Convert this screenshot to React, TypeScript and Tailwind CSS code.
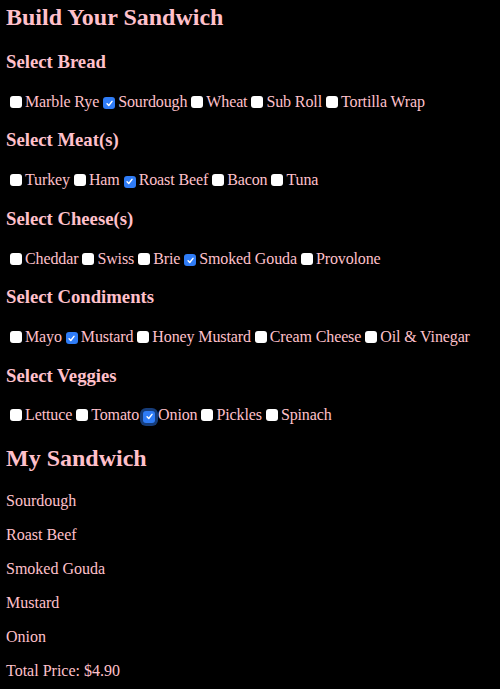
import React from "react";

type Item = { name: string; checked?: boolean; focus?: boolean };

const sections: { title: string; items: Item[] }[] = [
  {
    title: "Select Bread",
    items: [
      { name: "Marble Rye" },
      { name: "Sourdough", checked: true },
      { name: "Wheat" },
      { name: "Sub Roll" },
      { name: "Tortilla Wrap" },
    ],
  },
  {
    title: "Select Meat(s)",
    items: [
      { name: "Turkey" },
      { name: "Ham" },
      { name: "Roast Beef", checked: true },
      { name: "Bacon" },
      { name: "Tuna" },
    ],
  },
  {
    title: "Select Cheese(s)",
    items: [
      { name: "Cheddar" },
      { name: "Swiss" },
      { name: "Brie" },
      { name: "Smoked Gouda", checked: true },
      { name: "Provolone" },
    ],
  },
  {
    title: "Select Condiments",
    items: [
      { name: "Mayo" },
      { name: "Mustard", checked: true },
      { name: "Honey Mustard" },
      { name: "Cream Cheese" },
      { name: "Oil & Vinegar" },
    ],
  },
  {
    title: "Select Veggies",
    items: [
      { name: "Lettuce" },
      { name: "Tomato" },
      { name: "Onion", checked: true, focus: true },
      { name: "Pickles" },
      { name: "Spinach" },
    ],
  },
];

function Box({ checked, focus }: { checked?: boolean; focus?: boolean }) {
  if (checked) {
    return (
      <span
        className={
          "inline-flex items-center justify-center w-[12px] h-[12px] ml-[4px] mr-[3px] rounded-[3px] bg-[#2f7cf6] align-[-1px] " +
          (focus ? "shadow-[0_0_0_3px_rgba(40,110,220,0.55)]" : "")
        }
      >
        <svg width="9" height="9" viewBox="0 0 10 10">
          <path d="M2.3 5.3 L4.2 7.2 L7.8 2.6" stroke="white" strokeWidth="1.6" fill="none" strokeLinecap="round" strokeLinejoin="round" />
        </svg>
      </span>
    );
  }
  return <span className="inline-block w-[12px] h-[12px] ml-[4px] mr-[3px] rounded-[3px] bg-white align-[-1px]" />;
}

export default function App() {
  return (
    <div className="min-h-[689px] bg-black text-[#ffc0cb] px-[6px] pt-[3px] pb-[1px] font-['Liberation_Serif','Times_New_Roman',serif] text-[16px]">
      <h2 className="text-[24px] font-bold leading-[28px] mb-[19.92px]">Build Your Sandwich</h2>
      {sections.map((s) => (
        <div key={s.title}>
          <h3 className="text-[18.72px] font-bold leading-[22px] my-[18.72px]">{s.title}</h3>
          <div className="leading-[19px] h-[19px] whitespace-nowrap tracking-[-0.12px]">
            {s.items.map((it) => (
              <label key={it.name}>
                <Box checked={it.checked} focus={it.focus} />
                {it.name}
              </label>
            ))}
          </div>
        </div>
      ))}
      <h2 className="text-[24px] font-bold leading-[28px] my-[19.92px]">My Sandwich</h2>
      {["Sourdough", "Roast Beef", "Smoked Gouda", "Mustard", "Onion", "Total Price: $4.90"].map((t) => (
        <p key={t} className="my-4 leading-[18px]">{t}</p>
      ))}
    </div>
  );
}
